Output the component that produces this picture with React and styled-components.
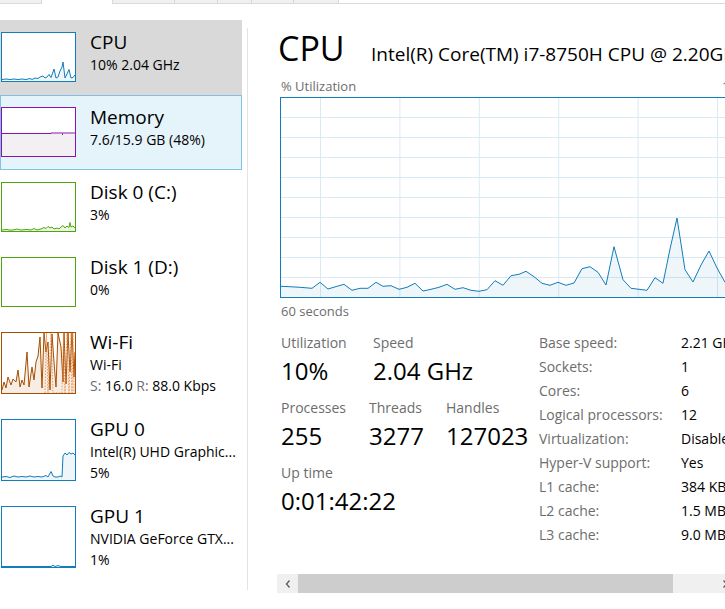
import React from 'react'
import styled, { createGlobalStyle } from 'styled-components'

const font = `"Open Sans", "Noto Sans", "Liberation Sans", sans-serif`
const grey = '#6d6d6d'
const blue = '#117dbb'

const GlobalStyle = createGlobalStyle`
  html, body {
    margin: 0;
    padding: 0;
    background: #fff;
    overflow: hidden;
  }
  body {
    font-family: ${font};
    color: #000;
  }
`

const Window = styled.div`
  width: 725px;
  height: 609px;
  overflow: hidden;
  display: flex;
  flex-direction: column;
  background: #fff;
`

const TabStrip = styled.div`
  display: flex;
  height: 4px;
  flex-shrink: 0;
`

const Tab = styled.div`
  box-sizing: border-box;
  width: ${p => (p.$w ? `${p.$w}px` : 'auto')};
  flex: ${p => (p.$w ? 'none' : 1)};
  background: ${p => (p.$plain ? '#fff' : '#f0f0f0')};
  border-bottom: ${p => (p.$active ? 'none' : '1px solid #d9d9d9')};
  border-right: ${p => (p.$w ? '1px solid #d9d9d9' : 'none')};
`

const Body = styled.div`
  flex: 1;
  display: flex;
  min-height: 0;
`

const Sidebar = styled.div`
  width: 242px;
  flex-shrink: 0;
  padding-top: 16px;
  overflow: hidden;
`

const Item = styled.div`
  box-sizing: border-box;
  height: ${p => p.$h}px;
  display: flex;
  align-items: flex-start;
  border: 1px solid ${p => (p.$hover ? '#84c0e6' : 'transparent')};
  background: ${p => (p.$selected ? '#d9d9d9' : p.$hover ? '#e5f3fb' : 'transparent')};
`

const ThumbSvg = styled.svg`
  display: block;
  flex-shrink: 0;
  margin-top: 11px;
  background: #fff;
`

const ItemText = styled.div`
  margin-left: 14px;
  padding-top: 9px;
  white-space: nowrap;
`

const ItemTitle = styled.div`
  font-size: 19px;
  line-height: 24px;
`

const ItemSub = styled.div`
  font-size: 14px;
  line-height: 21px;
`

const Dim = styled.span`
  color: ${grey};
`

const Divider = styled.div`
  width: 1px;
  flex-shrink: 0;
  background: #e3e3e3;
  margin: 24px 0 19px 5px;
`

const Main = styled.div`
  flex: 1;
  min-width: 0;
  display: flex;
  flex-direction: column;
  padding: 22px 0 16px 30px;
`

const Header = styled.div`
  display: flex;
  align-items: baseline;
  white-space: nowrap;
`

const Title = styled.div`
  width: 93px;
  flex-shrink: 0;
  font-size: 34px;
  line-height: 44px;
`

const CpuName = styled.div`
  font-size: 19px;
  line-height: 24px;
`

const AxisRow = styled.div`
  display: flex;
  justify-content: space-between;
  width: 474px;
  flex-shrink: 0;
  margin: ${p => (p.$top ? '8px 0 2px 3px' : '5px 0 0 3px')};
  font-size: 13px;
  line-height: 17px;
  color: ${grey};
  white-space: nowrap;
`

const ChartSvg = styled.svg`
  display: block;
  flex-shrink: 0;
  margin-left: 2px;
`

const Stats = styled.div`
  display: flex;
  margin: 11px 0 0 3px;
`

const StatColumn = styled.div`
  width: 258px;
  flex-shrink: 0;
  padding-top: 2px;
`

const StatRow = styled.div`
  display: flex;
  margin-bottom: 11px;
`

const StatBlock = styled.div`
  width: ${p => (p.$w ? `${p.$w}px` : 'auto')};
  flex-shrink: 0;
  white-space: nowrap;
`

const StatLabel = styled.div`
  font-size: 14px;
  line-height: 20px;
  color: ${grey};
  margin-bottom: 2px;
`

const StatValue = styled.div`
  font-size: 24px;
  line-height: 32px;
`

const InfoTable = styled.div`
  display: grid;
  grid-template-columns: 142px max-content;
  font-size: 14px;
  line-height: 24px;
  white-space: nowrap;
`

const InfoLabel = styled.div`
  color: ${grey};
`

const InfoValue = styled.div`
  color: #000;
`

const ScrollBar = styled.div`
  margin-top: auto;
  margin-left: -1px;
  width: 458px;
  height: 19px;
  flex-shrink: 0;
  display: flex;
  background: #f0f0f0;
`

const Arrow = styled.div`
  width: 21px;
  flex-shrink: 0;
  display: flex;
  align-items: center;
  justify-content: center;
`

const ScrollThumb = styled.div`
  width: 375px;
  flex-shrink: 0;
  background: #cdcdcd;
`

const ScrollTrack = styled.div`
  flex: 1;
`

const Thumb = ({ color, h, children }) => (
  <ThumbSvg width="75" height={h} viewBox={`0 0 75 ${h}`}>
    {children}
    <rect x="0.5" y="0.5" width="74" height={h - 1} fill="none" stroke={color} />
  </ThumbSvg>
)

const Series = ({ points, color, h, opacity = 0.07 }) => {
  const first = points.split(' ')[0].split(',')[0]
  const last = points.split(' ').slice(-1)[0].split(',')[0]
  return (
    <>
      <polygon points={`${first},${h} ${points} ${last},${h}`} fill={color} fillOpacity={opacity} />
      <polyline points={points} fill="none" stroke={color} strokeWidth="1" strokeLinejoin="round" />
    </>
  )
}

const cpuThumb =
  '1,47.5 5,47 9,47.5 13,47 17,47.5 21,47 25,47.5 29,46.5 31,47.5 34,46 37,46.5 39,45 42,44 44,46 46,45 48,42.5 50,45.5 52,40 53,37 55,46 57,45 59,39 61,35 62,30 64,46 66,42 68,37.5 70,46 72,45.5 74,43'

const diskThumb =
  '1,48 6,47.5 8,48 12,48 16,47 20,48 26,47.5 30,48 33,46.5 36,48 40,47 43,45.5 45,46.5 47,44.5 49,46 51,45 53,47 56,46 58,47 60,45 62,43.5 64,46 66,44 68,45.5 69,40.5 70,45 72,44 74,46'

const wifiRecv =
  '1,58 3,50 5,56 7,45 10,53 12,47 15,50 17,38 19,55 21,48 23,53 26,20 28,55 31,35 33,48 35,30 37,24 39,5 41,56 43,1 45,20 47,10 49,58 51,2 53,30 55,55 57,1 60,15 62,50 63,1 65,52 67,1 69,40 71,1 73,45 74,20'

const wifiSend =
  '44,61 45.5,1 47,61 50,1 52,61 61,61 62.5,1 64,61 66,1 68,61 70,1 71,61 72,1 73,61'

const gpu0Thumb =
  '1,58 5,57.5 9,58.5 13,57 17,58 21,57.5 25,58 29,57 33,58 37,57.5 41,58 45,56.5 47,58 50,52.5 52,57 54,58 57,58 59,57 61,58 62,37 64,34 66,36 68,33.5 70,35 72,34 74,36'

const gpu1Thumb = '1,60.5 50,60.5 52,59.3 54,60.5 57,59.6 60,60.5 74,60.5'

const chartPoints = [
  [0, 189.3], [10, 189.7], [20, 190.3], [32, 191.3], [40, 185.3], [48, 192], [57, 189.3],
  [64, 187.3], [72, 193.3], [80, 191.3], [88, 191.3], [96, 185.3], [103, 189.3], [111, 188.7],
  [119, 192.3], [127, 190.3], [135, 186.3], [143, 194], [151, 192.3], [159, 190.3], [167, 187.3],
  [175, 192.3], [183, 190.7], [191, 193.3], [199, 194.3], [207, 192.7], [215, 183.7], [223, 188.3],
  [231, 178.7], [239, 177.3], [246, 174.3], [254, 179.7], [262, 186.3], [270, 188.3], [278, 185.3],
  [286, 188.3], [294, 186], [302, 171.7], [310, 169.7], [318, 175.3], [326, 188], [334, 149.7],
  [343, 182.7], [351, 191.3], [359, 192.3], [367, 193.3], [375, 180.7], [383, 186.3], [390, 152],
  [397, 121], [405, 172.7], [413, 185], [421, 168], [429, 154], [437, 171], [445, 185.3],
  [453, 178], [461, 186], [473, 184],
]

const CHART_W = 474
const CHART_H = 201

const UtilChart = () => {
  const line = chartPoints.map(([x, y]) => `${x},${y}`).join(' ')
  const rows = Array.from({ length: 9 }, (_, i) => 20.5 + i * 20)
  const cols = Array.from({ length: 6 }, (_, i) => 40.5 + i * 79.4)
  return (
    <ChartSvg width={CHART_W} height={CHART_H} viewBox={`0 0 ${CHART_W} ${CHART_H}`}>
      {rows.map(y => (
        <line key={`r${y}`} x1="0" x2={CHART_W} y1={y} y2={y} stroke="#d9eaf4" />
      ))}
      {cols.map(x => (
        <line key={`c${x}`} x1={x} x2={x} y1="0" y2={CHART_H} stroke="#d9eaf4" />
      ))}
      <polygon points={`0,${CHART_H} ${line} ${CHART_W},${CHART_H}`} fill={blue} fillOpacity="0.07" />
      <polyline points={line} fill="none" stroke={blue} strokeWidth="1" strokeLinejoin="round" />
      <rect x="0.5" y="0.5" width={CHART_W - 1} height={CHART_H - 1} fill="none" stroke={blue} />
    </ChartSvg>
  )
}

const Chevron = ({ dir }) => (
  <svg width="8" height="10" viewBox="0 0 8 10">
    <polyline
      points={dir === 'left' ? '5.5,1.5 2.5,5 5.5,8.5' : '2.5,1.5 5.5,5 2.5,8.5'}
      fill="none"
      stroke="#606060"
      strokeWidth="1.4"
    />
  </svg>
)

const info = [
  ['Base speed:', '2.21 GHz'],
  ['Sockets:', '1'],
  ['Cores:', '6'],
  ['Logical processors:', '12'],
  ['Virtualization:', 'Disabled'],
  ['Hyper-V support:', 'Yes'],
  ['L1 cache:', '384 KB'],
  ['L2 cache:', '1.5 MB'],
  ['L3 cache:', '9.0 MB'],
]

const App = () => {
  return (
    <Window>
      <GlobalStyle />
      <TabStrip>
        <Tab $w={42} />
        <Tab $w={71} $plain $active />
        <Tab $w={62} />
        <Tab $w={43} />
        <Tab $w={34} />
        <Tab $w={42} />
        <Tab $w={45} />
        <Tab $plain />
      </TabStrip>
      <Body>
        <Sidebar>
          <Item $h={75} $selected>
            <Thumb color={blue} h={50}>
              <Series points={cpuThumb} color={blue} h={50} />
            </Thumb>
            <ItemText>
              <ItemTitle>CPU</ItemTitle>
              <ItemSub>10% 2.04 GHz</ItemSub>
            </ItemText>
          </Item>
          <Item $h={75} $hover>
            <Thumb color="#8b12ae" h={50}>
              <rect x="1" y="26.5" width="73" height="23" fill="#f3f0f4" />
              <path d="M1 26.5 H50 V26 H74" fill="none" stroke="#8b12ae" />
              <rect x="61" y="26.5" width="1" height="1.5" fill="#8b12ae" />
            </Thumb>
            <ItemText>
              <ItemTitle>Memory</ItemTitle>
              <ItemSub>7.6/15.9 GB (48%)</ItemSub>
            </ItemText>
          </Item>
          <Item $h={75}>
            <Thumb color="#4da60c" h={50}>
              <Series points={diskThumb} color="#4da60c" h={50} opacity={0.1} />
            </Thumb>
            <ItemText>
              <ItemTitle>Disk 0 (C:)</ItemTitle>
              <ItemSub>3%</ItemSub>
            </ItemText>
          </Item>
          <Item $h={75}>
            <Thumb color="#4da60c" h={50} />
            <ItemText>
              <ItemTitle>Disk 1 (D:)</ItemTitle>
              <ItemSub>0%</ItemSub>
            </ItemText>
          </Item>
          <Item $h={87}>
            <Thumb color="#a74f01" h={62}>
              <Series points={wifiRecv} color="#a74f01" h={62} opacity={0.1} />
              <polyline points={wifiSend} fill="none" stroke="#e8823a" strokeWidth="0.8" strokeDasharray="1.5 1.5" />
            </Thumb>
            <ItemText>
              <ItemTitle>Wi-Fi</ItemTitle>
              <ItemSub>Wi-Fi</ItemSub>
              <ItemSub>
                <Dim>S:</Dim> 16.0 <Dim>R:</Dim> 88.0 Kbps
              </ItemSub>
            </ItemText>
          </Item>
          <Item $h={87}>
            <Thumb color={blue} h={62}>
              <Series points={gpu0Thumb} color={blue} h={62} />
            </Thumb>
            <ItemText>
              <ItemTitle>GPU 0</ItemTitle>
              <ItemSub>Intel(R) UHD Graphic...</ItemSub>
              <ItemSub>5%</ItemSub>
            </ItemText>
          </Item>
          <Item $h={87}>
            <Thumb color={blue} h={62}>
              <Series points={gpu1Thumb} color={blue} h={62} />
            </Thumb>
            <ItemText>
              <ItemTitle>GPU 1</ItemTitle>
              <ItemSub>NVIDIA GeForce GTX...</ItemSub>
              <ItemSub>1%</ItemSub>
            </ItemText>
          </Item>
        </Sidebar>
        <Divider />
        <Main>
          <Header>
            <Title>CPU</Title>
            <CpuName>Intel(R) Core(TM) i7-8750H CPU @ 2.20GHz</CpuName>
          </Header>
          <AxisRow $top>
            <span>% Utilization</span>
            <span>100%</span>
          </AxisRow>
          <UtilChart />
          <AxisRow>
            <span>60 seconds</span>
            <span>0</span>
          </AxisRow>
          <Stats>
            <StatColumn>
              <StatRow>
                <StatBlock $w={92}>
                  <StatLabel>Utilization</StatLabel>
                  <StatValue>10%</StatValue>
                </StatBlock>
                <StatBlock>
                  <StatLabel>Speed</StatLabel>
                  <StatValue>2.04 GHz</StatValue>
                </StatBlock>
              </StatRow>
              <StatRow>
                <StatBlock $w={88}>
                  <StatLabel>Processes</StatLabel>
                  <StatValue>255</StatValue>
                </StatBlock>
                <StatBlock $w={77}>
                  <StatLabel>Threads</StatLabel>
                  <StatValue>3277</StatValue>
                </StatBlock>
                <StatBlock>
                  <StatLabel>Handles</StatLabel>
                  <StatValue>127023</StatValue>
                </StatBlock>
              </StatRow>
              <StatRow>
                <StatBlock>
                  <StatLabel>Up time</StatLabel>
                  <StatValue>0:01:42:22</StatValue>
                </StatBlock>
              </StatRow>
            </StatColumn>
            <InfoTable>
              {info.map(([label, value]) => (
                <React.Fragment key={label}>
                  <InfoLabel>{label}</InfoLabel>
                  <InfoValue>{value}</InfoValue>
                </React.Fragment>
              ))}
            </InfoTable>
          </Stats>
          <ScrollBar>
            <Arrow>
              <Chevron dir="left" />
            </Arrow>
            <ScrollThumb />
            <ScrollTrack />
            <Arrow>
              <Chevron dir="right" />
            </Arrow>
          </ScrollBar>
        </Main>
      </Body>
    </Window>
  )
}

export default App
